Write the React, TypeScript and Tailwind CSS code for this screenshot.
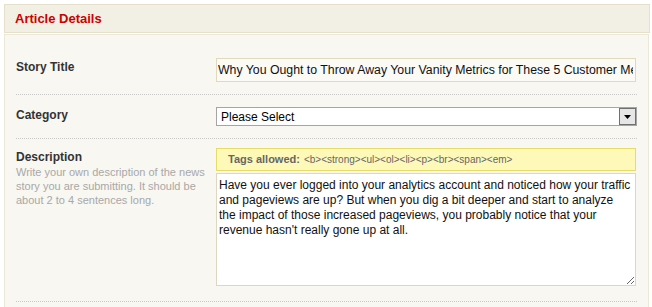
export default function App() {
  const font = { fontFamily: '"Liberation Sans", Arial, sans-serif' };
  return (
    <div className="h-[307px] w-[652px] overflow-hidden bg-white pt-[4px] pl-[4px]" style={font}>
      <div className="w-[646px] border border-[#e6e0ca] bg-[#f2efe4] px-[10px] pt-[7px] pb-[6px]">
        <h2 className="text-[13px] font-bold leading-[14px] text-[#cc0000]">Article Details</h2>
      </div>
      <div className="mt-[1px] h-[300px] w-[645px] border-x border-t border-[#ece8d8] bg-[#f8f7f2] px-[11px] pt-[23px]">
        <div className="flex items-start border-b border-dotted border-[#c8c8c8] pb-[12px]">
          <label className="mt-[2px] w-[200px] text-[12px] font-bold leading-[14px] text-[#333]">Story Title</label>
          <input
            readOnly
            value="Why You Ought to Throw Away Your Vanity Metrics for These 5 Customer Metrics"
            className="h-[24px] w-[420px] border border-[#e0d9bd] bg-[#fbfaf5] pl-[1px] pr-[2px] text-[12.3px] text-[#111] outline-none"
            style={font}
          />
        </div>
        <div className="flex items-start border-b border-dotted border-[#c8c8c8] pt-[12px] pb-[12px]">
          <label className="mt-[1px] w-[200px] text-[12px] font-bold leading-[14px] text-[#333]">Category</label>
          <div className="flex h-[19px] w-[421px] items-center border border-[#a5a5a5] bg-white">
            <span className="flex-1 pl-[4px] text-[12px] leading-[14px] text-black">Please Select</span>
            <span className="flex h-[17px] w-[17px] items-center justify-center border border-[#707070] bg-[#e6e6e6]">
              <svg width="7" height="4" viewBox="0 0 7 4">
                <path d="M0 0h7L3.5 4z" fill="#000" />
              </svg>
            </span>
          </div>
        </div>
        <div className="flex items-start border-b border-dotted border-[#c8c8c8] pt-[9px] pb-[15px]">
          <div className="w-[200px] pt-[2px] pr-[6px]">
            <div className="text-[12px] font-bold leading-[15px] text-[#333]">Description</div>
            <p className="text-[11px] leading-[14px] text-[#a8a8a8]">
              Write your own description of the news story you are submitting. It should be about 2 to 4 sentences long.
            </p>
          </div>
          <div className="w-[420px]">
            <div className="flex h-[23px] items-center border border-[#e8dc68] bg-[#fff9b9] pl-[11px] text-[#666]">
              <span className="text-[11px] font-bold">Tags allowed:</span>
              <span className="ml-[4px] text-[10px]">{"<b><strong><ul><ol><li><p><br><span><em>"}</span>
            </div>
            <textarea
              readOnly
              value="Have you ever logged into your analytics account and noticed how your traffic and pageviews are up? But when you dig a bit deeper and start to analyze the impact of those increased pageviews, you probably notice that your revenue hasn't really gone up at all."
              className="mt-[2px] block h-[113px] w-[420px] resize border border-[#ddd7c2] bg-white px-[2px] pt-[4px] text-[12px] leading-[15px] text-[#111] outline-none"
              style={font}
            />
          </div>
        </div>
      </div>
    </div>
  );
}
